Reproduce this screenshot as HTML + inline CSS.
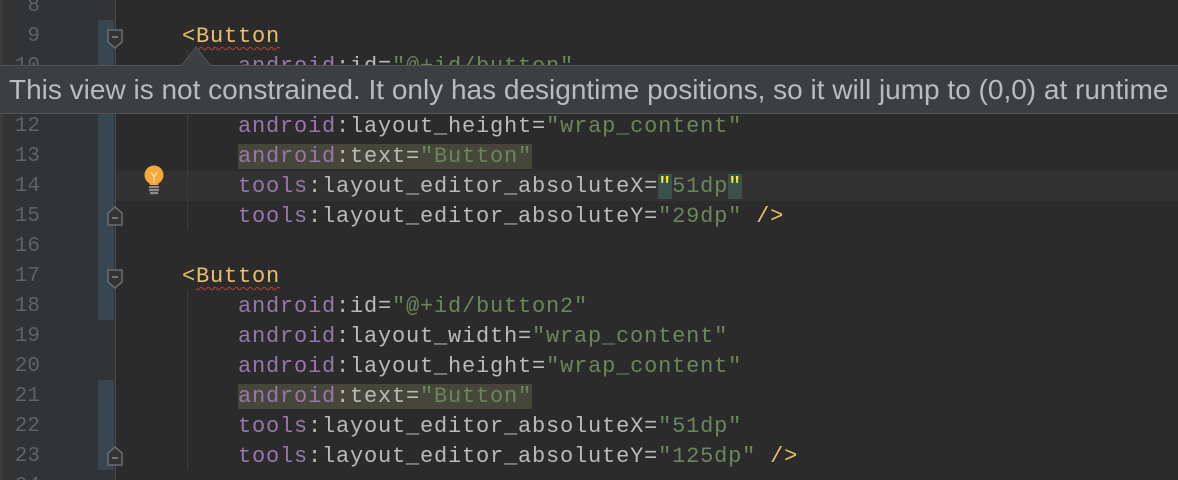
<!DOCTYPE html>
<html><head><meta charset="utf-8"><style>
html,body{margin:0;width:1178px;height:480px;overflow:hidden}
body{background:#2b2b2b;position:relative;font-family:"Liberation Mono",monospace}
.gut{position:absolute;left:0;top:0;width:115px;height:480px;background:#313335}
.gsep{position:absolute;left:115px;top:0;width:1px;height:480px;background:#4a4a4a}
.edge{position:absolute;left:0;top:0;width:3px;height:480px;background:#3c3c3c}
.blue{position:absolute;left:98px;width:16px;background:#374752}
.ln{position:absolute;left:0;width:40px;text-align:right;color:#606366;font-size:21px;line-height:30px;font-family:"Liberation Mono",monospace}
.code{position:absolute;left:0;white-space:pre;font-size:22px;letter-spacing:0.8px;line-height:30px;color:#bababa}
.t{color:#e8bf6a}.n{color:#9876aa}.s{color:#6a8759}
.wv{text-decoration:underline wavy #bc3f3c;text-decoration-thickness:1px;text-underline-offset:4px}
.hl{background:#47463a}
.q{background:#3b514d;color:#ffef28}
.cur{position:absolute;left:116px;right:0;top:171px;height:30px;background:#323232}
.guide{position:absolute;left:187px;width:1px;background:#3b3b3b}
.fold{position:absolute;left:107px}
.tip{position:absolute;left:-2px;right:0;top:65px;height:49px;background:#3c3f41;border:1px solid #555;border-right:none;box-sizing:border-box;color:#bbbbbb;font-family:"Liberation Sans",sans-serif;font-size:28px;line-height:47px;padding-left:10px;white-space:nowrap;overflow:hidden}
</style></head><body>
<div class="gut"></div><div class="edge"></div>
<div class="blue" style="top:20px;height:300px"></div>
<div class="blue" style="top:380px;height:90px"></div>
<div class="gsep"></div>
<div class="cur"></div>
<div class="guide" style="top:50px;height:180px"></div>
<div class="guide" style="top:290px;height:180px"></div>
<div class="ln" style="top:-8px">8</div>
<div class="ln" style="top:22px">9</div>
<div class="ln" style="top:52px">10</div>
<div class="ln" style="top:82px">11</div>
<div class="ln" style="top:112px">12</div>
<div class="ln" style="top:142px">13</div>
<div class="ln" style="top:172px">14</div>
<div class="ln" style="top:202px">15</div>
<div class="ln" style="top:232px">16</div>
<div class="ln" style="top:262px">17</div>
<div class="ln" style="top:292px">18</div>
<div class="ln" style="top:322px">19</div>
<div class="ln" style="top:352px">20</div>
<div class="ln" style="top:382px">21</div>
<div class="ln" style="top:412px">22</div>
<div class="ln" style="top:442px">23</div>
<div class="ln" style="top:472px">24</div>
<svg class="fold" style="top:29px" viewBox="0 0 16 20" width="16" height="20"><path d="M1 1H15V13L8 19L1 13Z" fill="#313335" stroke="#6a6d70" stroke-width="1.5"/><path d="M5 8H11" stroke="#8a8d90" stroke-width="1.5"/></svg>
<svg class="fold" style="top:269px" viewBox="0 0 16 20" width="16" height="20"><path d="M1 1H15V13L8 19L1 13Z" fill="#313335" stroke="#6a6d70" stroke-width="1.5"/><path d="M5 8H11" stroke="#8a8d90" stroke-width="1.5"/></svg>
<svg class="fold" style="top:206px" viewBox="0 0 16 20" width="16" height="20"><path d="M1 19H15V7L8 1L1 7Z" fill="#313335" stroke="#6a6d70" stroke-width="1.5"/><path d="M5 12H11" stroke="#8a8d90" stroke-width="1.5"/></svg>
<svg class="fold" style="top:446px" viewBox="0 0 16 20" width="16" height="20"><path d="M1 19H15V7L8 1L1 7Z" fill="#313335" stroke="#6a6d70" stroke-width="1.5"/><path d="M5 12H11" stroke="#8a8d90" stroke-width="1.5"/></svg>
<svg style="position:absolute;left:143px;top:165px" width="22" height="30" viewBox="0 0 22 30"><circle cx="11" cy="10" r="9.5" fill="#f5a83a"/><path d="M5 14Q11 21 17 14L15 20H7Z" fill="#f5a83a"/><path d="M8 7L11 12L14 7M11 12V18" stroke="#fde6a8" stroke-width="1.2" fill="none"/><rect x="6" y="21" width="10" height="2.2" fill="#8c8c8c"/><rect x="6" y="24" width="10" height="2.2" fill="#8c8c8c"/><rect x="7" y="27" width="8" height="2.2" fill="#8c8c8c"/></svg>
<div class="code" style="top:22px;left:182px"><span class="t">&lt;<span class="wv">Button</span></span></div>
<div class="code" style="top:52px;left:238px"><span class="n">android</span>:id=<span class="s">"@+id/button"</span></div>
<div class="code" style="top:112px;left:238px"><span class="n">android</span>:layout_height=<span class="s">"wrap_content"</span></div>
<div class="code" style="top:142px;left:238px"><span class="hl"><span class="n">android</span>:text=<span class="s">"Button"</span></span></div>
<div class="code" style="top:172px;left:238px"><span class="n">tools</span>:layout_editor_absoluteX=<span class="q">"</span><span class="s">51dp</span><span class="q">"</span></div>
<div class="code" style="top:202px;left:238px"><span class="n">tools</span>:layout_editor_absoluteY=<span class="s">"29dp"</span> <span class="t">/&gt;</span></div>
<div class="code" style="top:262px;left:182px"><span class="t">&lt;<span class="wv">Button</span></span></div>
<div class="code" style="top:292px;left:238px"><span class="n">android</span>:id=<span class="s">"@+id/button2"</span></div>
<div class="code" style="top:322px;left:238px"><span class="n">android</span>:layout_width=<span class="s">"wrap_content"</span></div>
<div class="code" style="top:352px;left:238px"><span class="n">android</span>:layout_height=<span class="s">"wrap_content"</span></div>
<div class="code" style="top:382px;left:238px"><span class="hl"><span class="n">android</span>:text=<span class="s">"Button"</span></span></div>
<div class="code" style="top:412px;left:238px"><span class="n">tools</span>:layout_editor_absoluteX=<span class="s">"51dp"</span></div>
<div class="code" style="top:442px;left:238px"><span class="n">tools</span>:layout_editor_absoluteY=<span class="s">"125dp"</span> <span class="t">/&gt;</span></div>
<div class="tip">This view is not constrained. It only has designtime positions, so it will jump to (0,0) at runtime</div>
<svg style="position:absolute;left:181px;top:46px" width="32" height="21" viewBox="0 0 32 21"><path d="M0 20L15 1L30 20" fill="#3c3f41" stroke="#555" stroke-width="1"/><rect x="1" y="19.5" width="28" height="2" fill="#3c3f41"/></svg>
</body></html>
